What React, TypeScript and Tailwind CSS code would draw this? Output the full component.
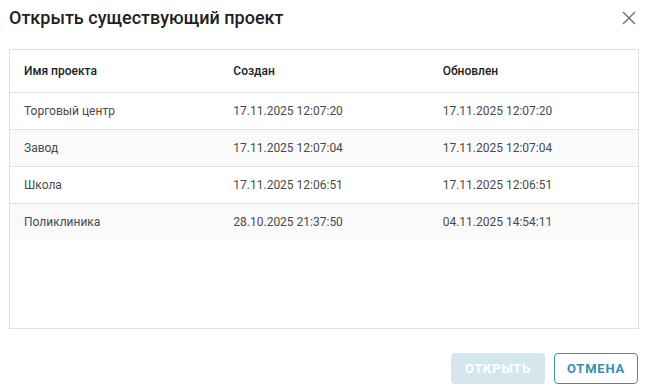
import React from "react";

const rows = [
  { name: "Торговый центр", created: "17.11.2025 12:07:20", updated: "17.11.2025 12:07:20" },
  { name: "Завод", created: "17.11.2025 12:07:04", updated: "17.11.2025 12:07:04" },
  { name: "Школа", created: "17.11.2025 12:06:51", updated: "17.11.2025 12:06:51" },
  { name: "Поликлиника", created: "28.10.2025 21:37:50", updated: "04.11.2025 14:54:11" },
];

export default function App() {
  return (
    <div
      className="w-[654px] h-[390px] bg-white text-[#212121] flex flex-col"
      style={{ fontFamily: "Roboto, 'Liberation Sans', sans-serif" }}
    >
      {/* header */}
      <div className="flex items-center justify-between pl-[9px] pr-[18px] h-[34px] pt-[1px]">
        <h2 className="text-[18px] font-medium leading-none">Открыть существующий проект</h2>
        <button className="w-[14px] h-[14px] flex items-center justify-center text-[#757575]">
          <svg width="14" height="14" viewBox="0 0 14 14" fill="none" stroke="currentColor" strokeWidth="1.5">
            <path d="M1 1L13 13M13 1L1 13" />
          </svg>
        </button>
      </div>

      {/* table */}
      <div className="ml-[9px] w-[630px] mt-[15px] h-[280px] border border-[#e0e0e0] text-[12px]">
        <div className="grid grid-cols-3 h-[43px] items-center border-b border-[#e0e0e0] font-medium text-[#212121]">
          <div className="px-[14px]">Имя проекта</div>
          <div className="px-[14px]">Создан</div>
          <div className="px-[14px]">Обновлен</div>
        </div>
        {rows.map((r, i) => (
          <div
            key={r.name}
            className={
              "grid grid-cols-3 items-center text-[#4a4a4a] " +
              (i % 2 === 1 ? "bg-[#fafafa] " : "bg-white ") +
              (i < rows.length - 1 ? "h-[37px] border-b border-[#e0e0e0]" : "h-[36px]")
            }
          >
            <div className="px-[14px]">{r.name}</div>
            <div className="px-[14px]">{r.created}</div>
            <div className="px-[14px]">{r.updated}</div>
          </div>
        ))}
      </div>

      {/* footer */}
      <div className="flex justify-end gap-[9px] pr-[16px] mt-[24px]">
        <button
          disabled
          className="h-[31px] w-[94px] rounded-[4px] bg-[#d5e7ec] text-white text-[13px] font-bold tracking-[0.06em]"
        >
          ОТКРЫТЬ
        </button>
        <button className="h-[31px] w-[84px] rounded-[4px] border border-[#3b8ea5] text-[#3b8ea5] text-[13px] font-bold tracking-[0.06em]">
          ОТМЕНА
        </button>
      </div>
    </div>
  );
}
